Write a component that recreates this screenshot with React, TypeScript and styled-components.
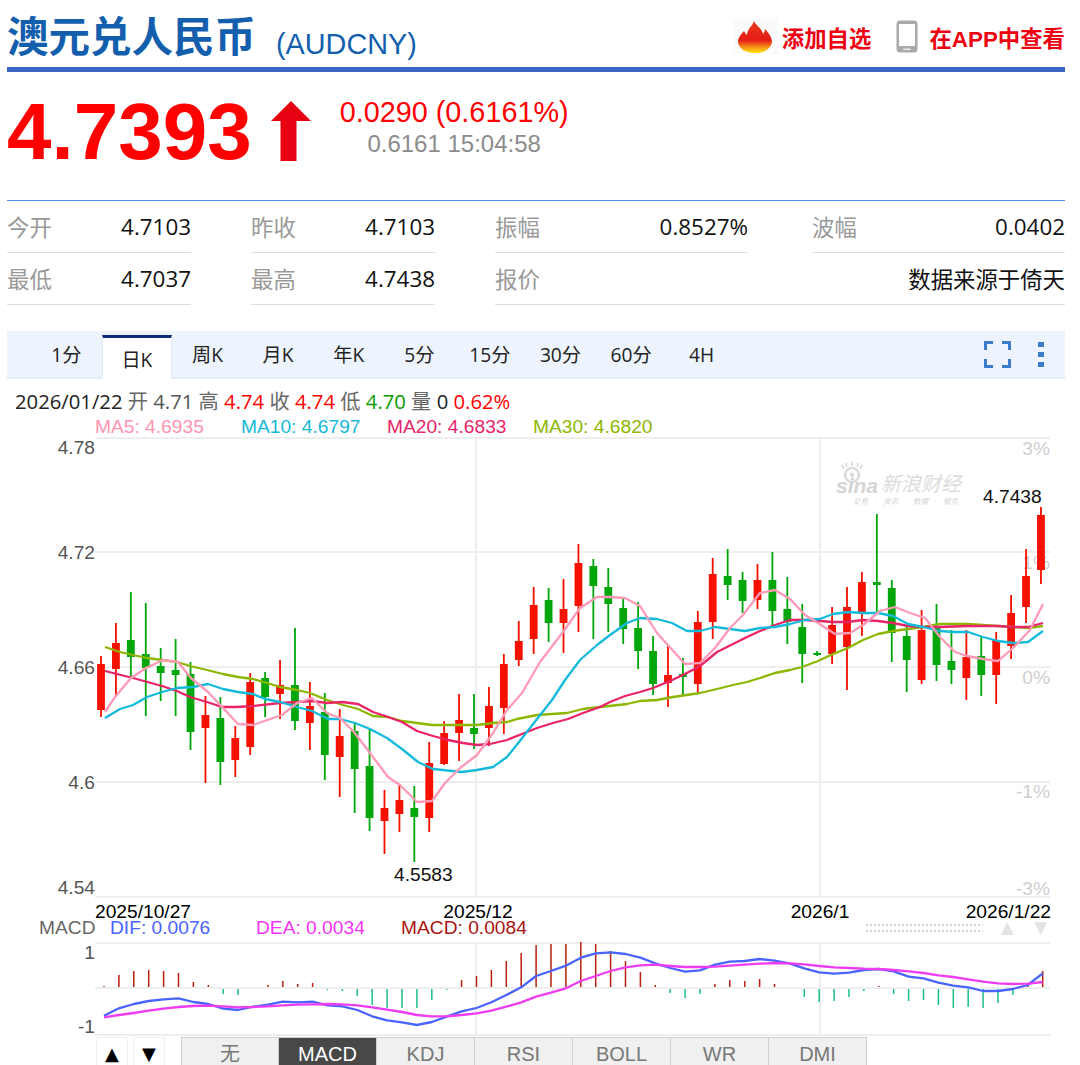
import styled, { createGlobalStyle } from "styled-components";

const GlobalStyle = createGlobalStyle`
  html, body {
    margin: 0;
    padding: 0;
    height: 1065px;
    overflow: hidden;
    background: #fff;
  }
`;

const ARIAL = `"Liberation Sans", "Noto Sans CJK SC", sans-serif`;
const UI_FONT = `"Open Sans", "Noto Sans CJK SC", sans-serif`;

// hi, lo, body top, body bottom, up (red) or down (green) - pixel rows of the chart
type Candle = [number, number, number, number, 0 | 1];

const CANDLES: Candle[] = [
  [656, 717, 664, 710, 1], [623, 697, 643, 669, 1], [592, 677, 640, 657, 0], [603, 716, 654, 668, 0],
  [648, 701, 666, 673, 0], [639, 716, 670, 675, 0], [662, 750, 674, 732, 0], [696, 783, 715, 728, 1],
  [697, 785, 718, 762, 0], [726, 777, 738, 760, 1], [673, 755, 682, 747, 1], [672, 717, 678, 697, 0],
  [660, 719, 685, 694, 1], [628, 730, 685, 721, 0], [682, 750, 706, 723, 1], [693, 780, 712, 755, 0],
  [709, 797, 736, 757, 1], [723, 813, 731, 769, 0], [728, 831, 766, 818, 0], [790, 854, 808, 821, 1],
  [785, 832, 800, 814, 1], [786, 862, 808, 817, 0], [742, 832, 763, 818, 1], [721, 765, 733, 764, 1],
  [694, 761, 720, 733, 1], [694, 749, 728, 734, 0], [687, 746, 706, 728, 1], [654, 734, 664, 708, 1],
  [621, 666, 641, 660, 1], [587, 654, 605, 639, 1], [588, 642, 600, 623, 0], [579, 653, 609, 623, 1],
  [544, 632, 563, 606, 1], [559, 639, 566, 586, 0], [568, 632, 587, 604, 0], [599, 644, 608, 629, 0],
  [602, 669, 628, 651, 0], [636, 695, 651, 684, 0], [645, 707, 675, 683, 1], [658, 696, 674, 677, 0],
  [611, 693, 622, 684, 1], [558, 639, 574, 622, 1], [549, 600, 576, 585, 0], [572, 613, 580, 601, 0],
  [564, 609, 580, 600, 1], [552, 627, 580, 611, 0], [577, 644, 609, 622, 0], [604, 683, 627, 654, 0],
  [651, 656, 653, 655, 0], [607, 664, 625, 654, 1], [587, 690, 607, 647, 1], [572, 636, 582, 613, 1],
  [514, 613, 582, 585, 0], [580, 662, 588, 633, 0], [627, 692, 636, 660, 0], [610, 684, 630, 680, 1],
  [604, 681, 627, 665, 0], [630, 684, 661, 670, 0], [630, 700, 657, 678, 1], [636, 696, 656, 675, 0],
  [632, 704, 640, 675, 1], [595, 659, 613, 646, 1], [549, 623, 576, 607, 1], [507, 584, 515, 570, 1],
];

const MA5 =
  "105,712 115,697 131,678 146,668 163,660 178,662 191,678 208,692 238,724 253,725 282,715 297,703 312,698 327,713 340,718 354,732 370,753 388,777 400,785 417,802 432,801 445,783 460,768 477,755 493,733 507,710 522,693 540,662 563,632 580,608 597,597 610,597 625,598 640,606 657,633 685,664 700,663 715,648 730,628 743,615 760,593 775,590 790,599 805,615 818,623 835,634 850,633 863,625 880,611 895,607 910,613 925,618 940,637 955,652 967,656 983,659 998,661 1013,648 1030,630 1043,604";
const MA10 =
  "105,718 120,709 133,705 147,697 162,692 177,688 193,687 208,684 223,689 238,692 253,694 265,699 280,702 297,707 312,711 328,719 340,719 355,723 370,729 387,738 402,749 418,762 433,769 462,772 477,770 493,767 507,757 523,737 537,719 552,700 565,680 580,660 597,645 610,635 627,623 640,618 657,619 672,623 687,631 700,631 715,627 730,629 745,631 760,628 775,627 790,624 805,620 820,619 833,614 848,612 863,613 878,613 893,616 908,624 923,627 940,631 953,632 968,632 983,637 998,641 1013,643 1028,642 1043,631";
const MA20 =
  "105,671 133,678 162,686 177,691 190,697 207,702 222,707 237,707 253,706 280,703 297,702 312,701 327,703 342,702 358,704 373,712 388,717 402,722 417,731 433,736 448,740 463,743 477,745 490,744 507,740 522,734 537,728 553,723 568,719 583,713 600,707 610,702 625,696 640,692 653,688 670,681 685,674 700,666 717,652 733,644 747,637 760,631 775,625 790,620 805,620 820,621 833,622 848,622 863,620 878,621 893,623 908,626 923,627 940,627 967,626 983,626 998,626 1013,627 1028,627 1043,623";
const MA30 =
  "105,647 120,652 133,655 147,658 162,660 177,662 190,666 207,670 223,674 238,677 253,679 267,683 280,687 297,690 310,693 327,700 343,705 358,709 373,716 388,717 402,721 417,723 432,725 460,725 477,725 493,723 507,722 517,719 537,715 567,713 583,709 600,707 627,704 640,701 657,700 673,697 700,693 717,689 733,685 747,682 760,678 775,673 790,670 802,667 818,661 833,654 848,648 863,640 878,634 893,631 908,629 923,627 940,624 967,624 983,625 998,626 1013,627 1028,628 1043,626";

const DIF = [
  1015.7, 1008.3, 1004, 1001, 999.3, 998.3, 1002, 1004, 1008.7, 1010, 1006.7, 1004.7, 1001.7, 1002.3, 1001.7, 1005.3,
  1006.3, 1010, 1016.3, 1020.3, 1022.3, 1025, 1022, 1016.7, 1011.3, 1008, 1002.3, 995, 987.3, 976, 971, 965.7, 957.7,
  953.3, 952.3, 954, 957.7, 963.3, 968, 971.7, 970.3, 964.7, 961.7, 961, 959, 960.7, 963.3, 968.3, 972.3, 973.7, 972.7,
  970, 969, 971.3, 976.7, 978.3, 982.7, 985.7, 987.3, 991, 991, 989, 985, 973.3,
];
const DEA = [
  1017.3, 1015, 1013, 1010.7, 1008.7, 1007, 1006, 1005.7, 1006.3, 1007.3, 1007, 1006.3, 1005.3, 1004.7, 1004.3, 1004,
  1004.3, 1005.3, 1007.3, 1009.7, 1012, 1015, 1016.3, 1016.3, 1015, 1013.3, 1010.7, 1006.7, 1002.3, 996.7, 992.7, 988.3,
  981, 976, 971, 967.3, 965.3, 964.7, 966, 967, 967, 966.7, 965.7, 964.7, 963.7, 963, 963.3, 964.3, 966, 967.3, 968,
  968.7, 969, 970, 971.3, 973, 975.3, 977, 979.3, 981.7, 983.3, 984, 983.7, 982,
];
// end row of each histogram bar, above the zero line is red, below it green
const HIST: (number | null)[] = [
  986, 975, 971, 970, 971, 973, 982, 985, 994, 995, null, 985, 981, 984, 983, 990, 991, 996, 1005, 1008, 1008, 1008, 1000,
  990, 980, 976, 970, 961, 953, 945, 944, 944, 941, 944, 951, 961, 972, 985, 993, 998, 994, 984, 980, 981, 979, 984, null,
  997, 1002, 1001, 997, 991, 986, 994, 1001, 1000, 1005, 1008, 1007, 1008, 1003, 995, 986, 971,
];
const ZERO = 988;

const histX = (i: number) => 104 + i * 14.9;
const toPoints = (ys: number[]) => ys.map((y, i) => `${histX(i).toFixed(1)},${y}`).join(" ");

const Page = styled.div`
  box-sizing: border-box;
  width: 1080px;
  height: 1065px;
  padding: 0 15px 0 7px;
  overflow: hidden;
  font-family: ${ARIAL};
`;

const Header = styled.header`
  display: flex;
  align-items: center;
  height: 67px;
  border-bottom: 5px solid #3a66c6;
`;

const Title = styled.h1`
  margin: 0;
  padding-top: 8px;
  font-size: 41.5px;
  font-weight: 700;
  color: #135fae;
  line-height: 59px;
`;

const Code = styled.span`
  margin-left: 20px;
  margin-top: 22px;
  font-size: 28.8px;
  color: #135fae;
`;

const HeaderAction = styled.div<{ $first?: boolean }>`
  display: flex;
  align-items: center;
  margin-top: 6px;
  margin-left: ${(p) => (p.$first ? "auto" : "25px")};
  font-size: 22.4px;
  font-weight: 700;
  color: #ee0011;
  gap: 11px;
`;

const FlameBox = styled.span`
  display: flex;
  align-items: center;
  justify-content: center;
  width: 45px;
  height: 35px;
  margin-right: -7px;
  background: #fafafa;
`;

const PriceRow = styled.section`
  display: flex;
  align-items: flex-start;
  height: 128px;
  border-bottom: 1px solid #4a90e2;
`;

const Price = styled.div`
  margin-top: 20px;
  font-size: 80px;
  line-height: 80px;
  font-weight: 700;
  color: #ff0000;
`;

const PriceArrow = styled.svg`
  flex: none;
  width: 40px;
  height: 60px;
  margin: 29px 0 0 19.5px;
`;

const Change = styled.div`
  margin: 22px 0 0 28.5px;
  text-align: center;
  font-size: 28.8px;
  line-height: 36px;
  color: #ff0000;
`;

const ChangeTime = styled.div`
  margin-top: -2px;
  font-size: 24px;
  line-height: 32px;
  color: #8c8c8c;
`;

const StatsGrid = styled.section`
  display: grid;
  grid-template-columns: 244px 244px 317px 253px;
  font-family: ${UI_FONT};
  font-size: 22.4px;
`;

const StatCell = styled.div<{ $wide?: boolean }>`
  grid-column: ${(p) => (p.$wide ? "span 2" : "auto")};
  display: flex;
  align-items: center;
  justify-content: space-between;
  height: 51px;
  border-bottom: 1px solid #dedede;
  color: #111;

  &:nth-child(4n + 1),
  &:nth-child(4n + 2) {
    margin-right: 60px;
  }
  &:nth-child(3) {
    margin-right: 64px;
  }
  &:nth-child(7) {
    margin-right: 0;
  }
`;

const StatLabel = styled.span`
  color: #999;
`;

const TabBar = styled.nav`
  display: flex;
  align-items: stretch;
  box-sizing: border-box;
  height: 48px;
  margin-top: 26px;
  padding-left: 24px;
  background: #eef4fd;
  border-bottom: 2px solid #e4ecf8;
  font-family: ${UI_FONT};
  font-size: 19.2px;
  color: #222;
`;

const PeriodTab = styled.div<{ $active?: boolean }>`
  box-sizing: border-box;
  width: 70.6px;
  display: flex;
  align-items: center;
  justify-content: center;
  margin-top: ${(p) => (p.$active ? "4px" : "0")};
  margin-bottom: ${(p) => (p.$active ? "-2px" : "0")};
  background: ${(p) => (p.$active ? "#fff" : "transparent")};
  border-top: ${(p) => (p.$active ? "3px solid #0b2a78" : "none")};
  border-left: ${(p) => (p.$active ? "1px solid #e2eaf5" : "none")};
  border-right: ${(p) => (p.$active ? "1px solid #e2eaf5" : "none")};
`;

const BarTools = styled.div`
  display: flex;
  align-items: center;
  gap: 27px;
  margin-left: auto;
  padding-right: 21px;
`;

const InfoLine = styled.div`
  height: 35px;
  padding-left: 8px;
  line-height: 44px;
  font-family: ${UI_FONT};
  font-size: 20.25px;
  color: #666;
  white-space: pre;
`;

const Num = styled.span<{ $color: string }>`
  color: ${(p) => p.$color};
`;

const MaLegend = styled.div`
  display: flex;
  height: 23px;
  padding-left: 88px;
  font-size: 19.2px;
  line-height: 26px;
`;

const LegendItem = styled.span<{ $color: string; $width: number }>`
  flex: none;
  width: ${(p) => p.$width}px;
  color: ${(p) => p.$color};
`;

const MainChart = styled.svg`
  display: block;
  width: 1058px;
  height: 483px;
`;

const MacdLegend = styled.div`
  display: flex;
  align-items: center;
  box-sizing: border-box;
  height: 22px;
  padding: 0 0 6px 32px;
  font-size: 19.2px;
  line-height: 18px;
`;

const Scroller = styled.svg`
  margin: 0 0 -6px auto;
  flex: none;
  width: 200px;
  height: 22px;
`;

const MacdChart = styled.svg`
  display: block;
  width: 1058px;
  height: 95px;
`;

const AxisText = styled.text<{ $fill: string; $size?: number }>`
  font-family: ${ARIAL};
  font-size: ${(p) => p.$size ?? 19.2}px;
  fill: ${(p) => p.$fill};
  dominant-baseline: central;
`;

const Grid = styled.path`
  fill: none;
  stroke: #eeeeee;
  stroke-width: 2;
`;

const Line = styled.polyline<{ $color: string }>`
  fill: none;
  stroke: ${(p) => p.$color};
  stroke-width: 2.3;
  stroke-linejoin: round;
`;

const IndicatorRow = styled.div`
  display: flex;
  height: 28px;
  padding-left: 89px;
`;

const StepButton = styled.div`
  box-sizing: border-box;
  width: 32px;
  margin-right: 5px;
  border: 1px solid #efefef;
  border-bottom: none;
  text-align: center;
  line-height: 32px;
  font-family: "DejaVu Sans", sans-serif;
  font-size: 18px;
  color: #000;
`;

const IndicatorTab = styled.div<{ $active?: boolean; $first?: boolean }>`
  box-sizing: border-box;
  width: 98px;
  margin-left: ${(p) => (p.$first ? "11px" : "0")};
  border: 1px solid #d0d0d0;
  border-left-width: ${(p) => (p.$first ? "1px" : "0")};
  border-bottom: none;
  background: ${(p) => (p.$active ? "#484848" : "#f0f0f0")};
  color: ${(p) => (p.$active ? "#fff" : "#777")};
  text-align: center;
  font-size: 20px;
  line-height: 32px;
`;

const Flame = () => (
  <svg width="34" height="32" viewBox="0 0 34 32">
    <defs>
      <linearGradient id="flame" x1="0" y1="0" x2="0" y2="1">
        <stop offset="0" stopColor="#e93a1c" />
        <stop offset="0.6" stopColor="#e51c16" />
        <stop offset="0.82" stopColor="#f6921a" />
        <stop offset="1" stopColor="#ffe600" />
      </linearGradient>
    </defs>
    <path
      fill="url(#flame)"
      d="M16 0C18 5 24 7 25 13C26 12 27 10 27 8C31 12 34 17 34 21C33 28 26 32 17 32C8 32 1 28 0 21C0 17 3 13 6 10C7 12 8 13 9 14C9 8 14 6 16 0Z"
    />
  </svg>
);

const Phone = () => (
  <svg width="22" height="33" viewBox="0 0 22 33">
    <rect x="0.5" y="0.5" width="21" height="32" rx="3.5" fill="#aaa" />
    <rect x="3" y="4" width="16" height="22" fill="#fff" />
    <rect x="7" y="28.5" width="8" height="1.6" rx="0.8" fill="#eee" />
  </svg>
);

const SinaMark = () => (
  <g fill="#dcdcdc">
    <circle cx="852" cy="475" r="7" fill="none" stroke="#dcdcdc" strokeWidth="2.6" />
    <circle cx="852" cy="475" r="2.4" />
    <path d="M844 469L842 465M847 467L846 463M852 466V462M857 467L858 463M860 469L862 465" stroke="#dcdcdc" strokeWidth="1.8" />
    <AxisText x="836" y="485" $fill="#d4d4d4" $size={21} fontWeight="700" fontStyle="italic">
      sina
    </AxisText>
    <AxisText x="881" y="484" $fill="#dcdcdc" $size={20} fontStyle="italic">
      新浪财经
    </AxisText>
    <AxisText x="853" y="501" $fill="#d4d4d4" $size={7.5} fontStyle="italic" xmlSpace="preserve">
      交易   ·   资讯   ·   数据   ·   服务
    </AxisText>
  </g>
);

const PERIODS = ["1分", "日K", "周K", "月K", "年K", "5分", "15分", "30分", "60分", "4H"];
const INDICATORS = ["无", "MACD", "KDJ", "RSI", "BOLL", "WR", "DMI"];

const PRICE_LABELS: [string, number][] = [["4.78", 447], ["4.72", 552], ["4.66", 667], ["4.6", 782], ["4.54", 887]];
const PERCENT_LABELS: [string, number][] = [["3%", 448], ["1%", 562], ["0%", 677], ["-1%", 791], ["-3%", 888]];

export default function App() {
  return (
    <Page>
      <GlobalStyle />
      <Header>
        <Title>澳元兑人民币</Title>
        <Code>(AUDCNY)</Code>
        <HeaderAction $first>
          <FlameBox>
            <Flame />
          </FlameBox>
          添加自选
        </HeaderAction>
        <HeaderAction>
          <Phone />
          在APP中查看
        </HeaderAction>
      </Header>

      <PriceRow>
        <Price>4.7393</Price>
        <PriceArrow viewBox="0 0 40 60">
          <polygon points="20,0 40,20 25.5,20 25.5,60 9.5,60 9.5,20 0,20" fill="#e60012" />
        </PriceArrow>
        <Change>
          0.0290 (0.6161%)
          <ChangeTime>0.6161 15:04:58</ChangeTime>
        </Change>
      </PriceRow>

      <StatsGrid>
        <StatCell>
          <StatLabel>今开</StatLabel>4.7103
        </StatCell>
        <StatCell>
          <StatLabel>昨收</StatLabel>4.7103
        </StatCell>
        <StatCell>
          <StatLabel>振幅</StatLabel>0.8527%
        </StatCell>
        <StatCell>
          <StatLabel>波幅</StatLabel>0.0402
        </StatCell>
        <StatCell>
          <StatLabel>最低</StatLabel>4.7037
        </StatCell>
        <StatCell>
          <StatLabel>最高</StatLabel>4.7438
        </StatCell>
        <StatCell $wide>
          <StatLabel>报价</StatLabel>数据来源于倚天
        </StatCell>
      </StatsGrid>

      <TabBar>
        {PERIODS.map((p) => (
          <PeriodTab key={p} $active={p === "日K"}>
            {p}
          </PeriodTab>
        ))}
        <BarTools>
          <svg width="27" height="27" viewBox="0 0 27 27" fill="none" stroke="#3d7ccb" strokeWidth="3">
            <path d="M1.5 9V1.5H9M18 1.5H25.5V9M25.5 18V25.5H18M9 25.5H1.5V18" />
          </svg>
          <svg width="6" height="25" viewBox="0 0 6 25" fill="#3d7ccb">
            <rect width="6" height="5" />
            <rect y="10" width="6" height="5" />
            <rect y="20" width="6" height="5" />
          </svg>
        </BarTools>
      </TabBar>

      <InfoLine>
        <Num $color="#222">2026/01/22</Num> 开 <Num $color="#555">4.71</Num> 高 <Num $color="#f00">4.74</Num> 收{" "}
        <Num $color="#f00">4.74</Num> 低 <Num $color="#0a9a00">4.70</Num> 量 <Num $color="#222">0</Num>{" "}
        <Num $color="#f00">0.62%</Num>
      </InfoLine>

      <MaLegend>
        <LegendItem $color="#ff93b1" $width={146}>MA5: 4.6935</LegendItem>
        <LegendItem $color="#14b9d8" $width={146}>MA10: 4.6797</LegendItem>
        <LegendItem $color="#e8246a" $width={146}>MA20: 4.6833</LegendItem>
        <LegendItem $color="#8db600" $width={146}>MA30: 4.6820</LegendItem>
      </MaLegend>

      <MainChart viewBox="7 437 1058 483">
        <Grid d="M95 438H1050M95 552H1050M95 667H1050M95 782H1050M95 897H1050M476 438V897M820 438V897" />
        {PRICE_LABELS.map(([t, y]) => (
          <AxisText key={t} x="95" y={y} textAnchor="end" $fill="#555">
            {t}
          </AxisText>
        ))}
        {PERCENT_LABELS.map(([t, y]) => (
          <AxisText key={t} x="1050" y={y} textAnchor="end" $fill="#cfcfcf">
            {t}
          </AxisText>
        ))}
        <SinaMark />
        {CANDLES.map(([hi, lo, top, bot, up], i) => {
          const x = 101 + i * 14.92;
          const color = up ? "#f51000" : "#00a60a";
          return (
            <g key={i}>
              <rect x={x - 0.9} y={hi} width="1.8" height={lo - hi} fill={color} />
              <rect x={x - 3.9} y={top} width="7.8" height={bot - top} fill={color} />
            </g>
          );
        })}
        <Line $color="#8db600" points={MA30} />
        <Line $color="#ea2468" points={MA20} />
        <Line $color="#14bada" points={MA10} />
        <Line $color="#ff9ab6" points={MA5} />
        <AxisText x="983" y="496" $fill="#111">4.7438</AxisText>
        <AxisText x="394" y="874" $fill="#111">4.5583</AxisText>
        <AxisText x="95" y="911" $fill="#000">2025/10/27</AxisText>
        <AxisText x="478" y="911" textAnchor="middle" $fill="#000">2025/12</AxisText>
        <AxisText x="820" y="911" textAnchor="middle" $fill="#000">2026/1</AxisText>
        <AxisText x="1051" y="911" textAnchor="end" $fill="#000">2026/1/22</AxisText>
      </MainChart>

      <MacdLegend>
        <LegendItem $color="#666" $width={71}>MACD</LegendItem>
        <LegendItem $color="#4a64ff" $width={146}>DIF: 0.0076</LegendItem>
        <LegendItem $color="#f535f5" $width={145}>DEA: 0.0034</LegendItem>
        <LegendItem $color="#a81512" $width={140}>MACD: 0.0084</LegendItem>
        <Scroller viewBox="865 920 200 22">
          <path d="M866 925H983M866 931H983" stroke="#d6d6d6" strokeWidth="2" strokeDasharray="2 2" />
          <polygon points="1001,935 1007,922 1014,935" fill="#e4e4e4" />
          <polygon points="1034,922 1047,922 1041,935" fill="#e4e4e4" />
        </Scroller>
      </MacdLegend>

      <MacdChart viewBox="7 942 1058 95">
        <Grid d={`M95 943H1050M95 1035H1050M95 ${ZERO}H1050M476 943V1035M820 943V1035`} />
        <AxisText x="95" y="952" textAnchor="end" $fill="#555">1</AxisText>
        <AxisText x="95" y="1026" textAnchor="end" $fill="#555">-1</AxisText>
        {HIST.map((y, i) =>
          y === null ? null : y < ZERO ? (
            <rect key={i} x={histX(i) - 0.75} y={y} width="1.5" height={ZERO - 1 - y} fill="#b9200d" />
          ) : (
            <rect key={i} x={histX(i) - 0.75} y={ZERO + 1} width="1.5" height={y - ZERO - 1} fill="#1cbf8c" />
          ),
        )}
        <Line $color="#4a64ff" points={toPoints(DIF)} />
        <Line $color="#ee3cf0" points={toPoints(DEA)} />
      </MacdChart>

      <IndicatorRow>
        <StepButton>▲</StepButton>
        <StepButton>▼</StepButton>
        {INDICATORS.map((t, i) => (
          <IndicatorTab key={t} $first={i === 0} $active={t === "MACD"}>
            {t}
          </IndicatorTab>
        ))}
      </IndicatorRow>
    </Page>
  );
}
